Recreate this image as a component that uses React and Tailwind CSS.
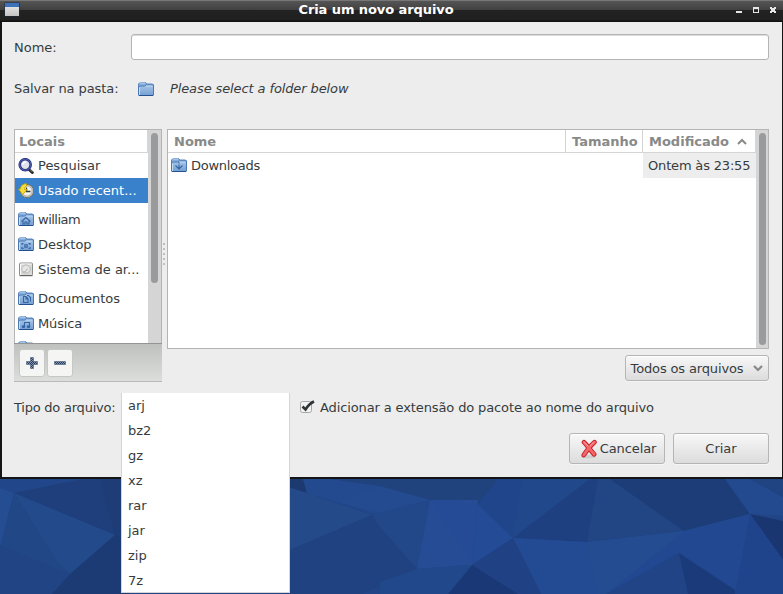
import React from "react";

function Folder({ children }) {
  return (
    <svg width="16" height="16" viewBox="0 0 16 16" className="mt-[-1px] shrink-0">
      <defs>
        <linearGradient id="folderFace" x1="0" y1="0" x2="0" y2="1">
          <stop offset="0" stopColor="#a6c6ea" />
          <stop offset="1" stopColor="#769fd0" />
        </linearGradient>
      </defs>
      <path d="M.5 14V3L2 1.500h5.500L9 3h5.500l1 1v10l-.5.500H1z" fill="#86add9" stroke="#5a87c0" />
      <path d="M2 2h5" stroke="#c3daf3" />
      <path d="M.5 14V6L2 5h4.500L8 4h7.500v10l-.5.500H1z" fill="url(#folderFace)" stroke="#4b79b5" />
      <path d="M1.500 14V6.500M8 5h6.500" stroke="#c3dbf3" fill="none" />
      <path d="M1 14.500h14" stroke="#23508f" />
      <g fill="none" stroke="#3465a4" strokeWidth="1.100">{children}</g>
    </svg>
  );
}

const HomeFolder = () => (
  <Folder><path d="M3.500 10.500L8 6.500l4.500 4M5 10v3h2v-2h2v2h2v-3" /></Folder>
);
const DesktopFolder = () => (
  <Folder><path d="M4 9V7.500h1.500M10.500 7.500H12V9M12 11V12.500h-1.500M5.500 12.500H4v-1.500" /><rect x="6.800" y="8.800" width="2.400" height="2.400" /></Folder>
);
const DocFolder = () => (
  <Folder><path d="M5.500 6.500h2.500l2 2v4H5.500zM8 6.500V9h2M9 5.500h1.500l2 2v4" /></Folder>
);
const MusicFolder = () => (
  <Folder><path d="M6.500 11.500V7.500h5V11.500" /><ellipse cx="5.500" cy="11.700" rx="1.200" ry=".8" fill="#3465a4" /><ellipse cx="10.500" cy="11.700" rx="1.200" ry=".8" fill="#3465a4" /></Folder>
);
const DownloadFolder = () => (
  <Folder><path d="M8 5V6.500M8 7.500v4M4.500 8.500L8 12 11.500 8.500" /></Folder>
);

function SearchIcon() {
  return (
    <svg width="16" height="16" viewBox="0 0 16 16" className="shrink-0">
      <path d="M11 11.500l3.300 3" stroke="#2a2c2b" strokeWidth="3" strokeLinecap="round" />
      <path d="M12 11.500l2.500 2.500" stroke="#888a85" />
      <circle cx="7.200" cy="6.700" r="5.500" fill="#dfe2ea" stroke="#27317e" strokeWidth="2.600" />
      <circle cx="7.200" cy="6.700" r="5.600" fill="none" stroke="#5b6dbb" strokeWidth=".8" />
      <path d="M4.800 6.500a3 3 0 0 1 3-2.500" fill="none" stroke="#fff" strokeWidth="1.500" />
    </svg>
  );
}

function RecentIcon() {
  return (
    <svg width="16" height="16" viewBox="0 0 16 16" className="shrink-0">
      <circle cx="9" cy="8" r="6.600" fill="#c9cac3" stroke="#77756a" />
      <circle cx="9" cy="8" r="5" fill="#f3f3ef" stroke="#a5a59c" strokeWidth=".7" />
      <path d="M8.500 4.500v4h4" fill="none" stroke="#3c3f3d" strokeWidth="1.300" />
      <path d="M8.500.8C5 .5 2.500 3 2.300 6H.5l4.300 5.500L9 6.500H6.500C6.500 4.700 7 3.500 8.500 3z" fill="#f5e03a" stroke="#c4a000" strokeWidth=".8" />
    </svg>
  );
}

function DriveIcon() {
  return (
    <svg width="16" height="16" viewBox="0 0 16 16" className="shrink-0">
      <rect x="1.500" y="1" width="13" height="12.500" rx="1" fill="#d9dad8" stroke="#8b8d89" />
      <path d="M2.500 13V2h11" stroke="#fafafa" fill="none" />
      <ellipse cx="8" cy="7" rx="4.300" ry="4" fill="#e6e7e5" stroke="#b5b7b3" />
      <path d="M4.500 10.500q4-.5 5-4" stroke="#b2b4b0" fill="none" />
      <path d="M1.500 13.700h13" stroke="#5b5d59" />
    </svg>
  );
}

function CancelIcon() {
  return (
    <svg width="18" height="20" viewBox="0 0 18 20" className="shrink-0">
      <ellipse cx="8.500" cy="17.800" rx="7.500" ry="1.700" fill="#cdcdcd" />
      <path d="M4 3.300C7 6 10.500 11.500 14.200 15.300M14.500 3.200C10 7 6.500 12 3.800 16" fill="none" stroke="#c01c24" strokeWidth="4.600" strokeLinecap="round" />
      <path d="M4 3.300C7 6 10.500 11.500 14.200 15.300M14.500 3.200C10 7 6.500 12 3.800 16" fill="none" stroke="#f46668" strokeWidth="2.900" strokeLinecap="round" />
      <path d="M4 3.300L8 7M14 3.300L10.500 6.500" stroke="#f9a0a0" strokeWidth="1" strokeLinecap="round" />
    </svg>
  );
}

function ToolGlyph({ plus }) {
  return (
    <svg width="12" height="12" viewBox="0 0 12 12">
      <defs>
        <pattern id="dither" width="2" height="2" patternUnits="userSpaceOnUse">
          <rect width="2" height="2" fill="#8593a8" />
          <rect width="1" height="1" fill="#253a5c" />
          <rect x="1" y="1" width="1" height="1" fill="#253a5c" />
        </pattern>
      </defs>
      <path
        d={plus ? "M4.500 .5h3v4h4v3h-4v4h-3v-4h-4v-3h4z" : "M.5 4.500h11v3H.5z"}
        fill="url(#dither)" stroke="#40587c" strokeOpacity=".55"
      />
    </svg>
  );
}

function Wallpaper() {
  return (
    <svg width="783" height="115" viewBox="0 479 783 115" className="block">
      <rect y="479" width="783" height="115" fill="#214586" />
      <path d="M0 479H83L14 493L0 488z" fill="#21468a" />
      <path d="M0 488L14 493L0 548z" fill="#244d92" />
      <path d="M14 493L83 479H130V545L115 535z" fill="#1e3f7b" />
      <path d="M100 479H130V540L115 535z" fill="#1e3c76" />
      <path d="M14 493L115 535L70 574L56 560z" fill="#234a8a" />
      <path d="M14 493L56 560L70 574L52 594H22L0 548z" fill="#224787" />
      <path d="M0 545L70 574L52 594H0z" fill="#214584" />
      <path d="M115 535L130 541V594H52L70 574z" fill="#1c3a73" />
      <path d="M285 479H303L307 493L285 487z" fill="#1c3970" />
      <path d="M303 479H380V515L307 493z" fill="#234a8e" />
      <path d="M307 493L372 515L285 552V486z" fill="#244a8a" />
      <path d="M372 515L285 552V594H362L417 569L380 521z" fill="#204280" />
      <path d="M330 479H498L478 504L430 500L380 486z" fill="#20427d" />
      <path d="M380 486L430 500L380 513L340 503z" fill="#244b90" />
      <path d="M372 515L430 500L417 569L380 527z" fill="#22488a" />
      <path d="M430 500H478L472 565L417 569z" fill="#254c94" />
      <path d="M430 500L478 504L472 562z" fill="#254b97" />
      <path d="M478 504L513 538L472 565z" fill="#244b96" />
      <path d="M498 479H522L513 538L478 504z" fill="#21458a" />
      <path d="M522 479H590L513 538z" fill="#22488c" />
      <path d="M590 479H598L587 542L513 538z" fill="#1e4080" />
      <path d="M598 479H610L684 531L587 542z" fill="#224583" />
      <path d="M610 479H725L750 514L684 531z" fill="#1c3d78" />
      <path d="M725 479H750L783 497V516L750 514z" fill="#234a8f" />
      <path d="M750 479H783V497z" fill="#204381" />
      <path d="M750 514L783 521V560z" fill="#1a3671" />
      <path d="M513 538L587 542L600 594H541z" fill="#234b93" />
      <path d="M587 542L684 531L750 514L679 553L606 594H598z" fill="#244d91" />
      <path d="M684 531L750 514L783 560V594H735L679 553L606 594z" fill="#224891" />
      <path d="M750 514L783 560V594H735z" fill="#20448b" />
      <path d="M679 553L606 594H688z" fill="#204486" />
      <path d="M679 553L735 590V594H688z" fill="#1b3a79" />
      <path d="M513 538L541 594H518L472 565z" fill="#204284" />
      <path d="M472 565L518 594H448z" fill="#1a3875" />
      <path d="M417 569L472 565L448 594H380V582z" fill="#21488a" />
    </svg>
  );
}

function PlaceRow({ icon, label, selected, tracking = "" }) {
  return (
    <div className={selected
      ? "flex h-[25px] shrink-0 items-center gap-1 whitespace-nowrap bg-[#3a81cb] pl-[3px] text-white"
      : "flex h-[25px] shrink-0 items-center gap-1 whitespace-nowrap pl-[3px]"}>
      {icon}<span className={tracking}>{label}</span>
    </div>
  );
}

function Titlebar() {
  return (
    <div className="flex h-[22px] shrink-0 items-center border-t border-[#777] bg-[linear-gradient(#555,#404040_9px,#222_9px,#202020_19px,#111_20px)] pl-1 pr-[5px]">
      <svg width="16" height="16" viewBox="0 0 16 16" className="mt-[-5px]">
        <defs><linearGradient id="appIcon" x1="0" y1="0" x2="0" y2="1"><stop offset="0" stopColor="#eee" /><stop offset="1" stopColor="#c4c4c4" /></linearGradient></defs>
        <rect x=".5" y="1.500" width="15" height="14" fill="#1d2c44" />
        <rect x="1" y="2" width="14" height="13" fill="url(#appIcon)" />
        <rect x="1" y="2" width="14" height="4" fill="#3e72b8" />
      </svg>
      <div className="mt-[-3px] flex-1 pr-1 text-center text-[13px] font-bold leading-4 tracking-[-0.08px] text-white">Cria um novo arquivo</div>
      <svg width="42" height="8" viewBox="0 0 42 8" className="mt-[-3px]" fill="#e6e6e6">
        <path d="M0 5h6v2H0z" />
        <path d="M17 1h6v6h-6zM18 3v3h4V3z" fillRule="evenodd" />
        <path d="M34 1h2v1h2V1h2v2h-1v2h1v2h-2V6h-2v1h-2V5h1V3h-1z" />
      </svg>
    </div>
  );
}

const button = "flex items-center justify-center rounded-[3px] border border-[#b4b6b5] bg-linear-to-b from-[#f8f8f8] to-[#dcdcdc] shadow-[inset_0_1px_0_#fff,0_1px_0_#f5f5f5]";
const places = [
  [<SearchIcon />, "Pesquisar"],
  [<RecentIcon />, "Usado recent..."],
  [<HomeFolder />, "william", "tracking-[-0.5px]"],
  [<DesktopFolder />, "Desktop"],
  [<DriveIcon />, "Sistema de ar..."],
  [<DocFolder />, "Documentos"],
  [<MusicFolder />, "Música", "tracking-[-0.15px]"],
  [<Folder />, ""],
];
const types = ["arj", "bz2", "gz", "xz", "rar", "jar", "zip", "7z"];

export default function App() {
  return (
    <div className="relative flex h-[594px] w-[783px] flex-col overflow-hidden bg-[#214586] text-[13px] leading-4 text-[#363c3e] [font-family:'DejaVu_Sans',sans-serif]">
      <div className="flex h-[479px] shrink-0 flex-col bg-[#151515]">
        <Titlebar />
        <div className="mb-[2px] ml-[2px] mr-px flex flex-1 flex-col bg-[#ededed] pl-3 pr-[13px] pt-3">
          <div className="flex h-[26px] items-center">
            <label className="w-[117px] pt-[2px]">Nome:</label>
            <div className="h-[26px] flex-1 rounded-[3px] border border-[#b3b5b4] bg-white shadow-[inset_0_1px_0_#ddd]" />
          </div>
          <div className="mt-[17px] flex h-6 items-center">
            <span className="w-[124px] tracking-[-0.08px]">Salvar na pasta:</span>
            <Folder />
            <span className="ml-4 italic tracking-[-0.11px]">Please select a folder below</span>
          </div>

          <div className="mt-7 flex h-[253px] items-start">
            <div className="flex w-[148px] flex-col">
              <div className="flex h-[214px] overflow-hidden border border-b-0 border-[#b3b5b4] bg-white">
                <div className="flex w-[133px] flex-col">
                  <div className="h-[23px] shrink-0 border-b border-r border-[#d5d5d5] pl-1 pt-1 font-bold text-[#888a89]">Locais</div>
                  {places.map(([icon, label, tracking], i) => (
                    <React.Fragment key={i}>
                      {(i === 2 || i === 5) && <div className="h-1 shrink-0" />}
                      <PlaceRow icon={icon} label={label} selected={i === 1} tracking={tracking} />
                    </React.Fragment>
                  ))}
                </div>
                <div className="flex-1 bg-[#d5d5d5] pl-[3px] pt-[3px]">
                  <div className="h-[150px] w-[7px] rounded-full bg-[#999b9d]" />
                </div>
              </div>
              <div className="flex h-[39px] items-start gap-[3px] border-y border-t-[#929593] border-b-[#b9bbba] bg-linear-to-b from-[#bfc1be] to-[#dcdedb] pl-[5px] pt-[5px]">
                <div className="flex h-[28px] w-[26px] items-center justify-center rounded-[3px] border border-[#c6c8c5] bg-[#f5f5f4]"><ToolGlyph plus /></div>
                <div className="ml-[-1px] flex h-[28px] w-[26px] items-center justify-center rounded-[3px] border border-[#c6c8c5] bg-[#f5f5f4]"><ToolGlyph /></div>
              </div>
            </div>
            <div className="flex w-[5px] flex-col items-start gap-[3px] pl-px pt-[114px]">
              {[0, 1, 2, 3, 4].map((n) => <i key={n} className="h-[2px] w-[2px] bg-[#bfbfbf]" />)}
            </div>
            <div className="flex h-[220px] flex-1 border border-[#b3b5b4] bg-white">
              <div className="flex flex-1 flex-col">
                <div className="flex h-[23px] border-b border-[#d5d5d5] font-bold text-[#888a89]">
                  <div className="flex-1 border-r border-[#d5d5d5] pl-[6px] pt-1">Nome</div>
                  <div className="w-[77px] border-r border-[#d5d5d5] pl-[6px] pt-1">Tamanho</div>
                  <div className="flex w-[113px] border-r border-[#d5d5d5] pl-[6px] pt-1">
                    Modificado
                    <svg width="10" height="7" viewBox="0 0 10 7" className="ml-2 mt-1"><path d="M1 6l4-4 4 4" fill="none" stroke="#888a85" strokeWidth="2" /></svg>
                  </div>
                </div>
                <div className="flex h-[25px] items-center">
                  <div className="flex flex-1 items-center gap-1 pl-[3px]"><DownloadFolder /><span className="tracking-[-0.28px]">Downloads</span></div>
                  <div className="h-[25px] w-[113px] whitespace-nowrap bg-[#ededed] pl-[5px] pt-[5px] tracking-[-0.17px]">Ontem às 23:55</div>
                </div>
              </div>
              <div className="w-3 bg-[#d5d5d5] pl-[3px] pt-[3px]">
                <div className="h-[212px] w-[7px] rounded-full bg-[#999b9d]" />
              </div>
            </div>
          </div>

          <div className="mt-[-27px] flex justify-end">
            <div className={`${button} h-[26px] w-[144px]`}>
              <span className="pt-px tracking-[-0.14px]">Todos os arquivos</span>
              <svg width="10" height="7" viewBox="0 0 10 7" className="ml-[10px]"><path d="M1 1l4 4 4-4" fill="none" stroke="#888a85" strokeWidth="2.200" /></svg>
            </div>
          </div>
          <div className="mt-[19px] flex h-4 items-center">
            <span className="w-[286px] tracking-[-0.23px]">Tipo do arquivo:</span>
            <svg width="16" height="14" viewBox="0 0 16 14" className="mr-1 mt-[-2px]">
              <rect x=".5" y="1.500" width="11" height="11" rx="2" fill="#f2f2f2" stroke="#a6a8a7" />
              <path d="M2.500 6.500L5.500 9.500C8 5.500 10.500 3 14 1.500" fill="none" stroke="#2e3436" strokeWidth="2.600" />
            </svg>
            <span className="tracking-[-0.12px]">Adicionar a extensão do pacote ao nome do arquivo</span>
          </div>
          <div className="mt-[17px] flex justify-end gap-2">
            <div className={`${button} h-[31px] w-[96px] gap-[2px] pl-[2px]`}><CancelIcon /><span className="tracking-[-0.1px]">Cancelar</span></div>
            <div className={`${button} h-[31px] w-[96px]`}>Criar</div>
          </div>
        </div>
      </div>
      <Wallpaper />
      <div className="absolute left-[121px] top-[393px] h-[200px] w-[169px] border-x border-b border-[#d3d5d7] bg-white pl-[6px]">
        {types.map((t) => <div key={t} className="flex h-[25px] items-center">{t}</div>)}
      </div>
    </div>
  );
}
